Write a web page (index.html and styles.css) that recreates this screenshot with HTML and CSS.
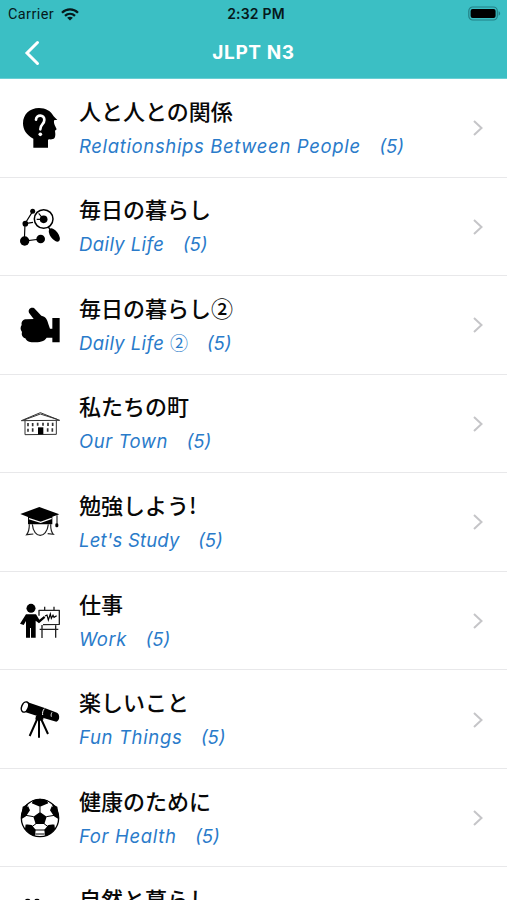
FILE: index.html
```html
<!DOCTYPE html>
<html lang="ja">

<head>
    <meta charset="UTF-8">
    <meta name="viewport" content="width=device-width, initial-scale=1.0">
    <title>JLPT N3</title>
    <link rel="stylesheet" href="styles.css">
</head>

<body>
    <header class="header">
        <div class="status-bar">
            <div class="carrier">
                <span>Carrier</span>
                <svg class="wifi" viewBox="0 0 18 13" fill="none" stroke="#06191b" stroke-width="2.3">
                    <path d="M1 4.7C5.5.3 12.5.3 17 4.7M4 7.9c2.9-2.7 7.1-2.7 10 0" />
                    <path d="M9 12.6 6.1 9.8c1.7-1.4 4.1-1.4 5.8 0z" fill="#06191b" stroke="none" />
                </svg>
            </div>
            <div class="time">2:32 PM</div>
            <svg class="battery" viewBox="0 0 34 15">
                <rect x="1.8" y="1" width="28.5" height="13" rx="4" fill="none" stroke="#238086" stroke-width="1.2" />
                <rect x="3.6" y="3" width="25" height="9" rx="2" fill="#000" />
                <path d="M31.6 5.3c2 .7 2 3.7 0 4.4z" fill="#238086" />
            </svg>
        </div>
        <div class="nav-bar">
            <svg class="back" viewBox="0 0 16 26"><path d="M13.5 2.5 3 13l10.5 10.5" /></svg>
            <h1>JLPT N3</h1>
        </div>
    </header>

    <ul class="topics">
        <li class="topic">
            <svg class="icon" viewBox="30 40 120 120">
                <path d="M70 159v-27c-21-11-31-27-31-46 0-27 20-46 48-46 20 0 36 9 44 25l11 11h-9c-3 6 0 11 1 15l6 13-5 4 1 10c0 13-4 17-18 16l-4 1v24z" />
                <path d="M78 75c1-17 26-16 25 1 0 13-12 12-12 28" fill="none" stroke="#fff" stroke-width="8" stroke-linecap="round" />
                <circle cx="91" cy="119" r="5.5" fill="#fff" />
            </svg>
            <div class="text">
                <h2>人と人との関係</h2>
                <p><span class="name relationships">Relationships Between People</span><span>(5)</span></p>
            </div>
            <svg class="chevron" viewBox="0 0 12 18"><path d="m2 2 7.5 7L2 16" /></svg>
        </li>
        <li class="topic">
            <svg class="icon" viewBox="30 35 120 120">
                <path d="m68 48-23 37-2 52 49-6M45 85l24-4M80 72h20M86 54l14 17" fill="none" stroke="#000" stroke-width="3.5" />
                <circle cx="68" cy="48" r="7.5" />
                <circle cx="46" cy="85" r="8.5" />
                <circle cx="44" cy="137" r="14" />
                <circle cx="92" cy="131" r="13" />
                <circle cx="101" cy="72" r="11.5" />
                <circle cx="101" cy="71" r="28" fill="none" stroke="#000" stroke-width="4.5" />
                <path d="m115 95 7 10" stroke="#000" stroke-width="4" />
                <ellipse cx="133" cy="119" rx="12" ry="23" transform="rotate(-36 133 119)" />
            </svg>
            <div class="text">
                <h2>毎日の暮らし</h2>
                <p><span class="name daily">Daily Life</span><span>(5)</span></p>
            </div>
            <svg class="chevron" viewBox="0 0 12 18"><path d="m2 2 7.5 7L2 16" /></svg>
        </li>
        <li class="topic">
            <svg class="icon" viewBox="30 31 120 120">
                <path d="M71 73 58 56c-6-11 3-20 14-16l22 23c13 3 18 11 21 25l5 14h7V70h22v73h-22v-14h-17c-7 12-22 14-40 14-14 0-20-4-24-12-10-3-12-11-10-19-6-8-5-15-1-21-2-11 5-17 15-17z" />
            </svg>
            <div class="text">
                <h2>毎日の暮らし②</h2>
                <p><span class="name daily">Daily Life <span class="circled">②</span></span><span>(5)</span></p>
            </div>
            <svg class="chevron" viewBox="0 0 12 18"><path d="m2 2 7.5 7L2 16" /></svg>
        </li>
        <li class="topic">
            <svg class="icon" viewBox="30 27 120 120">
                <path d="M45 77v42l94-1V77M34 77l57-24 58 23zM42 75l49-18 50 16" fill="none" stroke="#333" stroke-width="3" stroke-linejoin="round" />
                <path d="M84 97h16v21H84z" />
                <path d="M54 84v10M68 84v10M83 83v9M99 83v9M114 83v10M128 83v10M54 101v9M68 100v10M113 100v10M127 100v10" stroke="#333" stroke-width="5" />
            </svg>
            <div class="text">
                <h2>私たちの町</h2>
                <p><span class="name town">Our Town</span><span>(5)</span></p>
            </div>
            <svg class="chevron" viewBox="0 0 12 18"><path d="m2 2 7.5 7L2 16" /></svg>
        </li>
        <li class="topic">
            <svg class="icon" viewBox="30 37 120 120">
                <path d="m31 73 57-21 60 22-21 7v23H54V82z" />
                <path d="m57 87 35 11 33-12" fill="none" stroke="#fff" stroke-width="4" />
                <path d="M67 104c4 44 43 44 48 0M58 104c0 15-3 25-8 31l20-2M122 104c0 15 3 25 8 30l-17-2M141 77v25" fill="none" stroke="#222" stroke-width="3.5" />
                <rect x="136" y="101" width="9" height="12" rx="4" />
            </svg>
            <div class="text">
                <h2>勉強しよう!</h2>
                <p><span class="name study">Let's Study</span><span>(5)</span></p>
            </div>
            <svg class="chevron" viewBox="0 0 12 18"><path d="m2 2 7.5 7L2 16" /></svg>
        </li>
        <li class="topic">
            <svg class="icon" viewBox="30 33 120 120">
                <circle cx="63" cy="55" r="13.5" />
                <path d="M48 73h30l10 16 14-11 4 5-19 17-10-8v51H63v-29h-3v29H48V93l-7 12-11-4z" />
                <path d="M87 77V61h61v42l-49 1M104 61V50M132 61V50M96 105v39M137 104v39M89 118h56" fill="none" stroke="#222" stroke-width="4" stroke-linejoin="round" />
                <path d="m105 78 6-3 4 15 6-18 3 13 5-9 3 6 8-5" fill="none" stroke="#000" stroke-width="3.5" />
            </svg>
            <div class="text">
                <h2>仕事</h2>
                <p><span class="name work">Work</span><span>(5)</span></p>
            </div>
            <svg class="chevron" viewBox="0 0 12 18"><path d="m2 2 7.5 7L2 16" /></svg>
        </li>
        <li class="topic">
            <svg class="icon" viewBox="30 29 120 120">
                <path d="m49 34 53 18 39 15c10 5 8 26-2 27l-36-10-56-18z" />
                <ellipse cx="45" cy="50" rx="10" ry="16" transform="rotate(22 45 50)" fill="#fff" stroke="#000" stroke-width="4.5" />
                <path d="M103 55c-5 6-6 13-5 19M126 66c-3 5-3 9-2 13" fill="none" stroke="#fff" stroke-width="3" />
                <path d="M78 76h20l3 11-14 6-11-6z" />
                <path d="m83 83-24 54M87 83v59M92 83l22 48" stroke="#000" stroke-width="6" />
            </svg>
            <div class="text">
                <h2>楽しいこと</h2>
                <p><span class="name fun">Fun Things</span><span>(5)</span></p>
            </div>
            <svg class="chevron" viewBox="0 0 12 18"><path d="m2 2 7.5 7L2 16" /></svg>
        </li>
        <li class="topic">
            <svg class="icon" viewBox="30 39 120 120">
                <circle cx="90" cy="99" r="56" fill="#fff" stroke="#000" stroke-width="4" />
                <path d="m90 81 20 14-7 22H77l-7-22zM68 46l22-5 22 5 3 9-25 10-25-10zM34 90l4-25 14-7 8 18-12 18-13 8zM146 90l-4-25-14-7-8 18 12 18 13 8zM45 132l2-14 18 2 12 14-2 19-14-5zM135 132l-2-14-18 2-12 14 2 19 14-5z" />
                <path d="M90 64v18M71 95l-24-4M109 95l24-4M78 116l-12 9M102 116l12 9M75 135h30M76 147h28" fill="none" stroke="#000" stroke-width="3" />
                <path d="m52 64 15-13M128 64l-15-13M41 99l7 20M139 99l-7 20" stroke="#fff" stroke-width="3" />
            </svg>
            <div class="text">
                <h2>健康のために</h2>
                <p><span class="name health">For Health</span><span>(5)</span></p>
            </div>
            <svg class="chevron" viewBox="0 0 12 18"><path d="m2 2 7.5 7L2 16" /></svg>
        </li>
        <li class="topic">
            <svg class="icon" viewBox="30 335 120 120">
                <ellipse cx="53" cy="346" rx="8" ry="6" />
                <ellipse cx="81" cy="346" rx="8" ry="6" />
            </svg>
            <div class="text">
                <h2>自然と暮らし</h2>
            </div>
        </li>
    </ul>
</body>

</html>
```
FILE: styles.css
```css
* {
    margin: 0;
    padding: 0;
    box-sizing: border-box;
}

body {
    height: 900px;
    overflow: hidden;
    background-color: #fff;
    font-family: Inter, "Noto Sans CJK JP", sans-serif;
}

/* Header */
.header {
    height: 79px;
    background-color: #3bbfc4;
    border-bottom: 1px solid #6acfd4;
}

.status-bar {
    display: grid;
    grid-template-columns: 1fr auto 1fr;
    align-items: center;
    height: 27px;
    padding: 0 6px 0 8px;
    font-size: 14px;
    color: #06191b;
}

.carrier {
    display: flex;
    align-items: center;
    gap: 7px;
    padding-top: 1px;
    font-family: Roboto, sans-serif;
    font-size: 14.5px;
    letter-spacing: 0.4px;
}

.wifi {
    width: 18px;
    height: 13px;
}

.time {
    padding-left: 3px;
    font-weight: 600;
    letter-spacing: 0.2px;
}

.battery {
    width: 34px;
    height: 15px;
    justify-self: end;
}

.nav-bar {
    display: grid;
    grid-template-columns: 1fr auto 1fr;
    align-items: center;
    height: 51px;
    padding: 0 24px;
}

.back {
    width: 16px;
    height: 26px;
}

.back path {
    fill: none;
    stroke: #fff;
    stroke-width: 3;
    stroke-linecap: round;
}

h1 {
    font-size: 19px;
    font-weight: 700;
    letter-spacing: 0.6px;
    color: #fff;
}

/* Topic list */
.topics {
    list-style: none;
}

.topic {
    display: flex;
    align-items: center;
    height: 98.55px;
    padding: 1px 23px 0 20px;
    border-bottom: 1px solid #e8e8ea;
}

.icon {
    flex: none;
    width: 40px;
    height: 40px;
}

.text {
    flex: 1;
    min-height: 73px;
    margin-left: 19px;
}

h2 {
    font-family: "Noto Sans CJK JP", sans-serif;
    font-size: 22px;
    font-weight: 500;
    line-height: 36px;
    color: #080808;
}

.text p {
    display: flex;
    font-size: 18.5px;
    font-style: italic;
    font-feature-settings: "cv11";
    line-height: 37px;
    color: #2a7bca;
}

.name {
    margin-right: 18.5px;
}

/* Tracking per title */
.relationships,
.fun,
.health {
    letter-spacing: 0.65px;
}

.daily {
    letter-spacing: 0.4px;
}

.town,
.work {
    letter-spacing: 0.55px;
}

.study {
    letter-spacing: 0.2px;
}

.circled {
    font-family: "Noto Sans CJK JP", sans-serif;
    font-size: 18px;
    font-style: normal;
    font-feature-settings: normal;
    line-height: 1;
}

.chevron {
    width: 12px;
    height: 18px;
}

.chevron path {
    fill: none;
    stroke: #c5c5c8;
    stroke-width: 2;
}
```
